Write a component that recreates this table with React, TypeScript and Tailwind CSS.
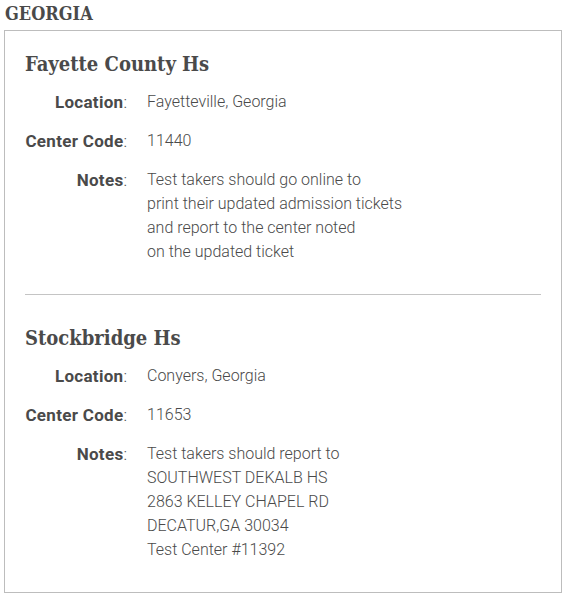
const centers = [
  {
    name: "Fayette County Hs",
    location: "Fayetteville, Georgia",
    code: "11440",
    notes: [
      "Test takers should go online to",
      "print their updated admission tickets",
      "and report to the center noted",
      "on the updated ticket",
    ],
  },
  {
    name: "Stockbridge Hs",
    location: "Conyers, Georgia",
    code: "11653",
    notes: [
      "Test takers should report to",
      "SOUTHWEST DEKALB HS",
      "2863 KELLEY CHAPEL RD",
      "DECATUR,GA 30034",
      "Test Center #11392",
    ],
  },
];

function Row({ label, children }: { label: string; children: React.ReactNode }) {
  return (
    <div className="flex">
      <div className="w-[102px] shrink-0 text-right text-[17px] leading-[24px]">
        <span className="font-bold tracking-[0.3px]">{label}</span>:
      </div>
      <div className="ml-[20px]">{children}</div>
    </div>
  );
}

export default function App() {
  return (
    <div className="bg-white min-h-screen pt-[2px] text-[#4a4a4a]">
      <h2 className="ml-[5px] text-[18px] leading-[24px] font-bold font-['DejaVu_Serif_Condensed','DejaVu_Serif',serif] mb-[4px]">
        GEORGIA
      </h2>
      <div className="mx-[4px] w-[558px] border border-[#bdbdbd] px-[20px] pt-[21px] pb-[30px] font-['Roboto',sans-serif] font-light text-[16px] leading-[24px]">
        {centers.map((c, i) => (
          <div key={c.name}>
            {i > 0 && <hr className="border-t border-[#c4c4c4] mt-[30px] mb-[31px]" />}
            <h3 className="text-[20px] leading-[24px] font-bold font-['DejaVu_Serif_Condensed','DejaVu_Serif',serif] mb-[14px]">
              {c.name}
            </h3>
            <div className="flex flex-col gap-[15px]">
              <Row label="Location">{c.location}</Row>
              <Row label="Center Code">{c.code}</Row>
              <Row label="Notes">
                {c.notes.map((n) => (
                  <div key={n}>{n}</div>
                ))}
              </Row>
            </div>
          </div>
        ))}
      </div>
    </div>
  );
}
